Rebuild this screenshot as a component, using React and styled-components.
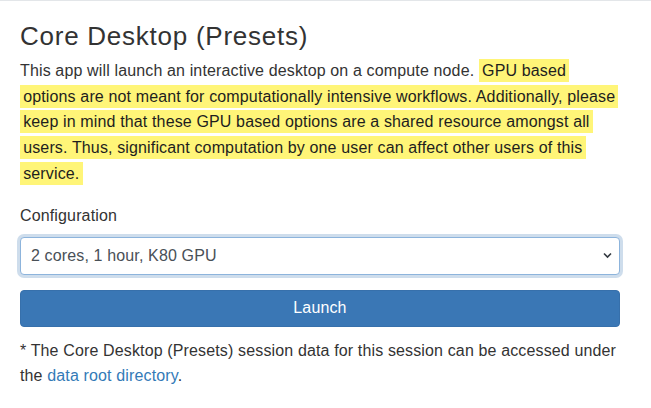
import React from 'react';
import styled, { createGlobalStyle } from 'styled-components';

const GlobalStyle = createGlobalStyle`
  * { box-sizing: border-box; }
  body {
    margin: 0;
    background: #fff;
    font-family: "Liberation Sans", Arial, sans-serif;
    color: #333;
  }
`;

const Page = styled.main`
  border-top: 1px solid #e3e6e9;
  padding: 21px 31px 0 20px;
`;

const Title = styled.h3`
  margin: 0 0 7px;
  font-size: 26px;
  font-weight: 500;
  line-height: 29px;
  letter-spacing: 0.75px;
  color: #333;
`;

const Text = styled.p`
  margin: 0 0 ${(p) => p.$gap || 16}px;
  font-size: 16px;
  line-height: 25.7px;
  letter-spacing: 0.14px;
`;

const Highlight = styled.span`
  background: #fff578;
  color: #1e1e1e;
  padding: 3px 0.2em;
  box-decoration-break: clone;
  -webkit-box-decoration-break: clone;
`;

const FormGroup = styled.div`
  margin-bottom: 15px;
`;

const Label = styled.label`
  display: block;
  margin-bottom: 9px;
  font-size: 16px;
  line-height: 24px;
  letter-spacing: 0.14px;
  color: #333;
`;

const SelectWrap = styled.div`
  position: relative;
`;

const Select = styled.select`
  display: block;
  width: 100%;
  height: 38px;
  padding: 0 30px 0 10px;
  font-family: "Liberation Sans", Arial, sans-serif;
  font-size: 16px;
  letter-spacing: 0.14px;
  color: #495057;
  background: #fff;
  border: 1px solid #8db4dc;
  border-radius: 4px;
  box-shadow: 0 0 0 3px rgba(58, 119, 181, 0.25);
  appearance: none;
  -webkit-appearance: none;
  outline: none;
`;

const Caret = styled.svg`
  position: absolute;
  right: 8px;
  top: 15px;
  width: 9px;
  height: 7px;
  pointer-events: none;
`;

const Button = styled.button`
  display: block;
  width: 100%;
  height: 37px;
  margin-bottom: 11px;
  font-family: "Liberation Sans", Arial, sans-serif;
  font-size: 16px;
  letter-spacing: 0.14px;
  color: #fff;
  background: #3a77b5;
  border: 1px solid #3770ab;
  border-radius: 4px;
  cursor: pointer;
`;

const Link = styled.a`
  color: #337ab7;
  text-decoration: none;
`;

export default function App() {
  return (
    <>
      <GlobalStyle />
      <Page>
        <Title>Core Desktop (Presets)</Title>
        <Text $gap={17}>
          This app will launch an interactive desktop on a compute node.{' '}
          <Highlight>
            GPU based options are not meant for computationally intensive workflows. Additionally,
            please keep in mind that these GPU based options are a shared resource amongst all
            users. Thus, significant computation by one user can affect other users of this service.
          </Highlight>
        </Text>
        <FormGroup>
          <Label htmlFor="config">Configuration</Label>
          <SelectWrap>
            <Select id="config" defaultValue="k80">
              <option value="k80">2 cores, 1 hour, K80 GPU</option>
            </Select>
            <Caret viewBox="0 0 9 7">
              <path d="M1 1.5 L4.5 5 L8 1.5" fill="none" stroke="#343a40" strokeWidth="1.6" />
            </Caret>
          </SelectWrap>
        </FormGroup>
        <Button type="button">Launch</Button>
        <Text $gap={0}>
          * The Core Desktop (Presets) session data for this session can be accessed under
          the <Link href="#">data root directory</Link>.
        </Text>
      </Page>
    </>
  );
}
